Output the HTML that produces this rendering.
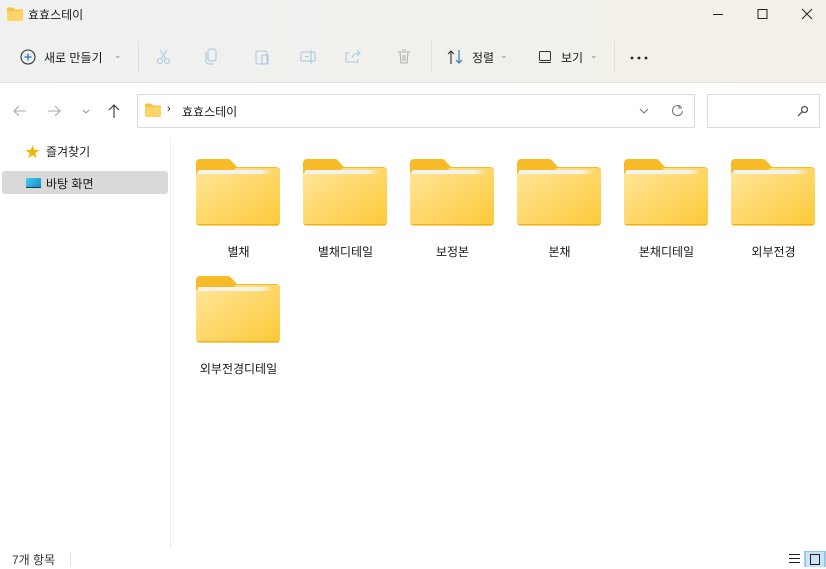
<!DOCTYPE html><html><head><meta charset="utf-8"><style>
*{margin:0;padding:0;box-sizing:border-box}
body{width:826px;height:569px;overflow:hidden;font-family:"Liberation Sans","Noto Sans CJK KR",sans-serif;font-size:12px;color:#1a1a1a;background:#fff;position:relative}
.hdr{position:absolute;left:0;top:0;width:826px;height:83px;background:linear-gradient(90deg,#eff1f1,#f4f0e8);border-bottom:1px solid #e2e2e2}
.a{position:absolute}
.t{position:absolute;white-space:nowrap}
.sep{position:absolute;width:1px;background:#e0e0e0}
.folder{position:absolute;width:84px;height:68px}
.lbl{position:absolute;width:107px;text-align:center;font-size:12px}
</style></head><body>
<div class="hdr"></div>
<svg class="a" style="left:7px;top:7px" width="16" height="14"><path d="M0 2a1.5 1.5 0 0 1 1.5-1.5H6l2 2h6.5A1.5 1.5 0 0 1 16 4v8.5a1.5 1.5 0 0 1-1.5 1.5h-13A1.5 1.5 0 0 1 0 12.5z" fill="#f6c343"/><rect x="0" y="4" width="16" height="10" rx="1.5" fill="#fcd468"/></svg>
<div class="t" style="left:28px;top:6px;font-size:12px">효효스테이</div>
<svg class="a" style="left:710px;top:8px" width="110" height="14" fill="none" stroke="#222" stroke-width="1"><path d="M3 6.5h10"/><rect x="48" y="1.5" width="9" height="9"/><path d="M92 1l10 10M102 1l-10 10"/></svg>
<svg class="a" style="left:20px;top:49px" width="16" height="16"><circle cx="8" cy="8" r="7" fill="none" stroke="#333" stroke-width="1.1"/><path d="M8 4.5v7M4.5 8h7" stroke="#1a73c9" stroke-width="1.2"/></svg>
<div class="t" style="left:44px;top:49px">새로 만들기</div>
<div class="t" style="left:114px;top:50px;font-size:9px;color:#888">⌄</div>
<div class="sep" style="left:138px;top:41px;height:32px"></div>
<svg class="a" style="left:155px;top:47px" width="270" height="20" fill="none" stroke="#a9c8e4" stroke-width="1.1">
<circle cx="5" cy="14" r="2.5"/><circle cx="12" cy="14" r="2.5"/><path d="M6 12L12 3M11 12L5 3"/>
<rect x="53" y="2" width="8" height="12" rx="2"/><path d="M51 5v9a3 3 0 0 0 3 3h5"/>
<rect x="101" y="4" width="11" height="13" rx="2"/><rect x="107" y="8" width="6" height="9" rx="1"/>
<rect x="146" y="5" width="14" height="9" rx="1"/><path d="M150 9.5h4M156 3v14"/>
<path d="M194 6h-3v9h12v-3M197 11c1-4 4-5 7-5M202 3l3 3-3 3"/>
<path d="M243 5h12M245 5l1 11h6l1-11M247 3h4M248 8v6M250 8v6" stroke="#b0b0b0"/>
</svg>
<div class="sep" style="left:431px;top:41px;height:32px"></div>
<svg class="a" style="left:447px;top:49px" width="18" height="16" fill="none" stroke-width="1.1"><path d="M4 15V2M1 5l3-3 3 3" stroke="#333"/><path d="M12 1v13M9 11l3 3 3-3" stroke="#1a73c9"/></svg>
<div class="t" style="left:472px;top:49px">정렬</div>
<div class="t" style="left:500px;top:50px;font-size:9px;color:#888">⌄</div>
<svg class="a" style="left:538px;top:50px" width="14" height="14" fill="none" stroke="#333"><rect x="1.5" y="1.5" width="11" height="9" rx="1"/><path d="M1 12.5h12"/></svg>
<div class="t" style="left:561px;top:49px">보기</div>
<div class="t" style="left:590px;top:50px;font-size:9px;color:#888">⌄</div>
<div class="sep" style="left:614px;top:41px;height:32px"></div>
<svg class="a" style="left:630px;top:56px" width="20" height="4" fill="#222"><circle cx="2" cy="2" r="1.4"/><circle cx="9" cy="2" r="1.4"/><circle cx="16" cy="2" r="1.4"/></svg>
<svg class="a" style="left:12px;top:103px" width="112" height="16" fill="none" stroke-width="1.1"><path d="M2 8h12M7 3L2 8l5 5" stroke="#aaa"/><path d="M36 8h12M43 3l5 5-5 5" stroke="#aaa"/><path d="M71 7l3 3 3-3" stroke="#999"/><path d="M102 15V2M97 7l5-5 5 5" stroke="#333"/></svg>
<div class="a" style="left:137px;top:94px;width:558px;height:34px;border:1px solid #dcdcdc;background:#fff"></div>
<svg class="a" style="left:145px;top:103px" width="16" height="14"><path d="M0 2a1.5 1.5 0 0 1 1.5-1.5H6l2 2h6.5A1.5 1.5 0 0 1 16 4v8.5a1.5 1.5 0 0 1-1.5 1.5h-13A1.5 1.5 0 0 1 0 12.5z" fill="#f6c343"/><rect x="0" y="4" width="16" height="10" rx="1.5" fill="#fcd468"/></svg>
<div class="t" style="left:167px;top:103px;font-size:11px">›</div>
<div class="t" style="left:182px;top:103px">효효스테이</div>
<svg class="a" style="left:638px;top:103px" width="50" height="16" fill="none" stroke="#777" stroke-width="1.1"><path d="M2 6l4 4 4-4"/><path d="M43 4a5 5 0 1 0 1.5 4M41 2v3h3"/></svg>
<div class="a" style="left:707px;top:94px;width:113px;height:34px;border:1px solid #dcdcdc;background:#fff"></div>
<svg class="a" style="left:796px;top:104px" width="14" height="14" fill="none" stroke="#555" stroke-width="1.3"><circle cx="8.5" cy="5.5" r="3"/><path d="M6.5 7.5L2 12"/></svg>
<div class="sep" style="left:170px;top:138px;height:410px;background:#ededed"></div>
<div class="t" style="left:25px;top:141px;color:#f4b400;font-size:15px">★</div>
<div class="t" style="left:46px;top:143px">즐겨찾기</div>
<div class="a" style="left:2px;top:171px;width:166px;height:23px;background:#d9d9d9;border-radius:3px"></div>
<div class="a" style="left:26px;top:178px;width:15px;height:10px;background:linear-gradient(135deg,#3fd1f0,#1a8cc8);border-bottom:1px solid #1f3a55"></div>
<div class="t" style="left:46px;top:175px">바탕 화면</div>
<svg width="0" height="0" style="position:absolute"><defs><linearGradient id="g" x1="0" y1="0" x2="1" y2="1"><stop offset="0" stop-color="#ffe69a"/><stop offset="1" stop-color="#fcc938"/></linearGradient><linearGradient id="p" x1="0" x2="1"><stop offset="0" stop-color="#f4f2ee"/><stop offset="0.85" stop-color="#f4f2ee"/><stop offset="1" stop-color="#f4f2ee" stop-opacity="0"/></linearGradient>
<g id="f"><path d="M0 4a4 4 0 0 1 4-4h28a4 4 0 0 1 3 1.5L41 8H80a4 4 0 0 1 4 4v50a4 4 0 0 1-4 4H4a4 4 0 0 1-4-4z" fill="#f6bb26"/><path d="M0 16a4 4 0 0 1 4-4h32l4-3h40a4 4 0 0 1 4 4v50a4 4 0 0 1-4 4H4a4 4 0 0 1-4-4z" fill="url(#g)"/><rect x="2" y="11" width="74" height="4" rx="1.5" fill="url(#p)"/><path d="M1 65.5h82" stroke="#eab12a" stroke-width="1"/></g></defs></svg>
<div class="folder" style="left:196px;top:159px"><svg width="84" height="68"><use href="#f"/></svg></div>
<div class="folder" style="left:303px;top:159px"><svg width="84" height="68"><use href="#f"/></svg></div>
<div class="folder" style="left:410px;top:159px"><svg width="84" height="68"><use href="#f"/></svg></div>
<div class="folder" style="left:517px;top:159px"><svg width="84" height="68"><use href="#f"/></svg></div>
<div class="folder" style="left:624px;top:159px"><svg width="84" height="68"><use href="#f"/></svg></div>
<div class="folder" style="left:731px;top:159px"><svg width="84" height="68"><use href="#f"/></svg></div>
<div class="folder" style="left:196px;top:276px"><svg width="84" height="68"><use href="#f"/></svg></div>
<div class="lbl" style="left:185px;top:243px">별채</div>
<div class="lbl" style="left:292px;top:243px">별채디테일</div>
<div class="lbl" style="left:399px;top:243px">보정본</div>
<div class="lbl" style="left:506px;top:243px">본채</div>
<div class="lbl" style="left:613px;top:243px">본채디테일</div>
<div class="lbl" style="left:720px;top:243px">외부전경</div>
<div class="lbl" style="left:185px;top:360px">외부전경디테일</div>
<div class="t" style="left:12px;top:551px;font-size:12px;color:#333">7개 항목</div>
<div class="sep" style="left:70px;top:552px;height:14px"></div>
<svg class="a" style="left:786px;top:551px" width="40" height="16" fill="none" stroke="#222"><path d="M3 3.5h11M3 7.5h11M3 11.5h11"/><rect x="19" y="0" width="20" height="17" fill="#cce4f7" stroke="#4aa3df"/><rect x="24.5" y="3.5" width="9" height="10" stroke="#222"/></svg>
</body></html>
